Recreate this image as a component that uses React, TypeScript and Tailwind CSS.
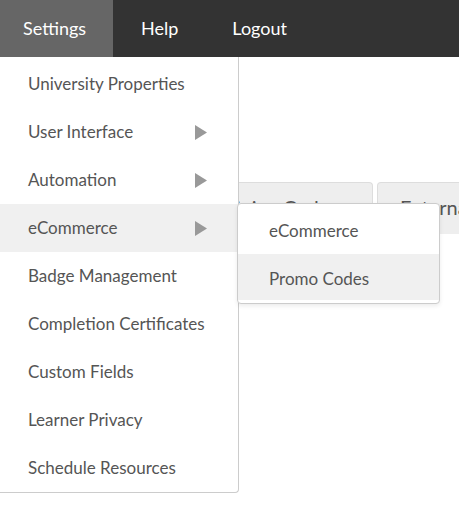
import React from "react";

const menuItems: { label: string; sub?: boolean; active?: boolean }[] = [
  { label: "University Properties" },
  { label: "User Interface", sub: true },
  { label: "Automation", sub: true },
  { label: "eCommerce", sub: true, active: true },
  { label: "Badge Management" },
  { label: "Completion Certificates" },
  { label: "Custom Fields" },
  { label: "Learner Privacy" },
  { label: "Schedule Resources" },
];

function Caret() {
  return (
    <svg width="12" height="15" viewBox="0 0 12 15" className="shrink-0">
      <path d="M0 0 L12 7.5 L0 15 Z" fill="#999" />
    </svg>
  );
}

export default function App() {
  return (
    <div
      className="relative h-[516px] w-[459px] overflow-hidden bg-white"
      style={{ fontFamily: '"Segoe UI", Lato, "Open Sans", sans-serif' }}
    >
      {/* top nav */}
      <nav className="flex h-[57px] items-stretch bg-[#333333] text-[18px] text-white">
        <a className="flex w-[113px] items-center bg-[#666666] pl-[23px]">Settings</a>
        <a className="flex items-center pl-[28px] pr-[26px]">Help</a>
        <a className="flex items-center px-[28px]">Logout</a>
      </nav>

      {/* page content behind the menu */}
      <div className="mt-[125px] flex gap-[4px] pl-[120px] text-[20px] text-[#555]">
        <div className="h-[52px] w-[253px] shrink-0 rounded-t-[4px] border border-b-0 border-[#dddddd] bg-[#eeeeee] pl-[88px] pt-[14px] leading-none">
          Training Codes
        </div>
        <div className="h-[52px] w-[200px] shrink-0 rounded-t-[4px] border border-b-0 border-[#dddddd] bg-[#eeeeee] pl-[22px] pt-[14px] leading-none">
          External
        </div>
      </div>

      {/* settings dropdown */}
      <div className="absolute left-[-4px] top-[57px] w-[243px] rounded-br-[4px] border border-t-0 border-[#cccccc] bg-white pt-[3px] text-[17px] text-[#555555]">
        {menuItems.map((item) => (
          <div
            key={item.label}
            className={`flex h-[48px] items-center justify-between pl-[31px] pr-[31px] ${
              item.active ? "bg-[#f0f0f0]" : ""
            }`}
          >
            <span>{item.label}</span>
            {item.sub ? <Caret /> : null}
          </div>
        ))}
      </div>

      {/* eCommerce submenu */}
      <div className="absolute left-[237px] top-[203px] w-[203px] rounded-[4px] border border-[#cccccc] bg-white py-[3px] text-[17px] text-[#555555] shadow-[0_2px_4px_rgba(0,0,0,0.08)]">
        <div className="flex h-[47px] items-center pl-[31px]">eCommerce</div>
        <div className="flex h-[46px] items-center bg-[#f0f0f0] pl-[31px] pt-[3px]">Promo Codes</div>
      </div>
    </div>
  );
}
